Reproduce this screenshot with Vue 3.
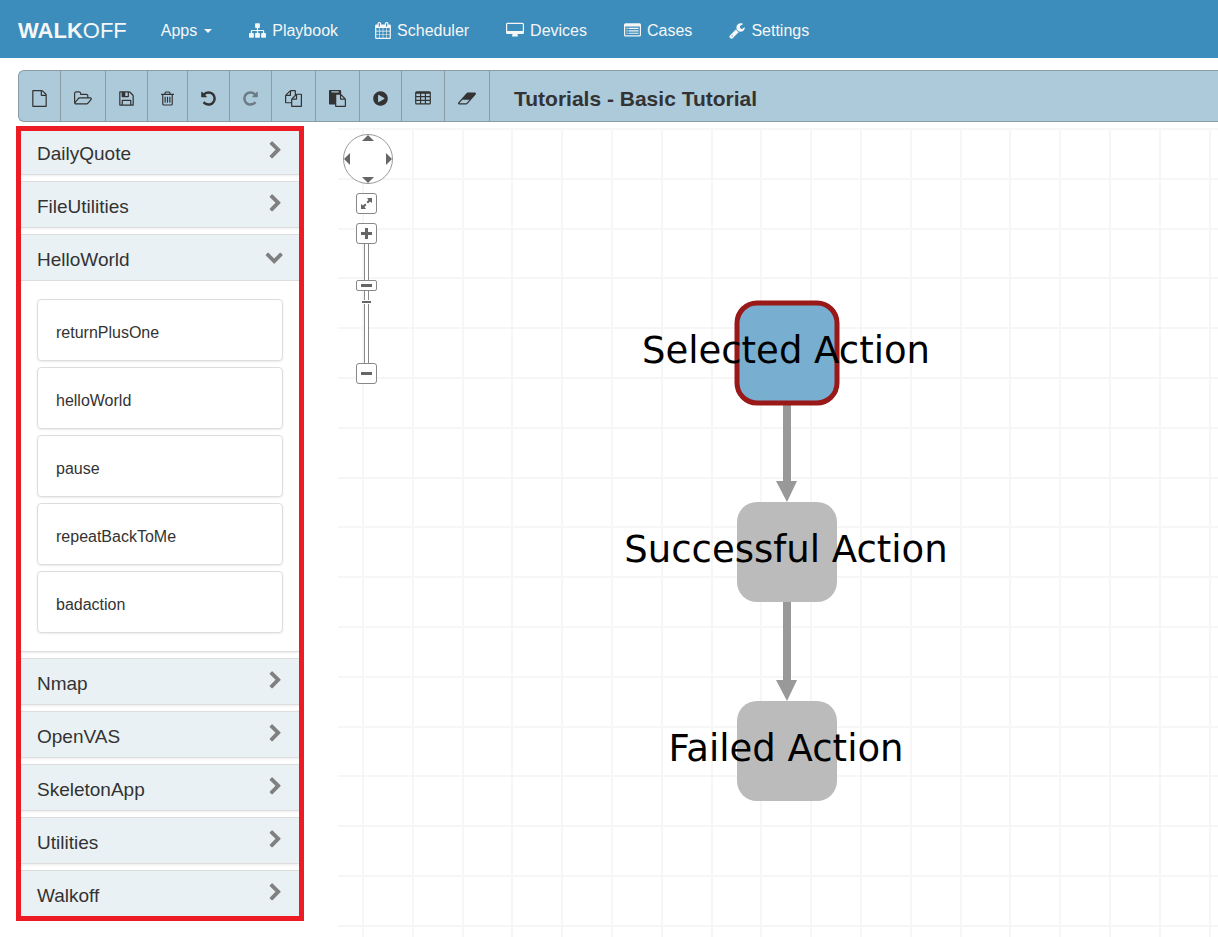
<script setup>
import { ref } from 'vue'

const navItems = [
  { label: 'Playbook', width: 17, box: '0 0 1792 1792', path: 'M1792 1248v320q0 40-28 68t-68 28h-320q-40 0-68-28t-28-68v-320q0-40 28-68t68-28h96v-192h-512v192h96q40 0 68 28t28 68v320q0 40-28 68t-68 28h-320q-40 0-68-28t-28-68v-320q0-40 28-68t68-28h96v-192h-512v192h96q40 0 68 28t28 68v320q0 40-28 68t-68 28h-320q-40 0-68-28t-28-68v-320q0-40 28-68t68-28h96v-192q0-52 38-90t90-38h512v-192h-96q-40 0-68-28t-28-68v-320q0-40 28-68t68-28h320q40 0 68 28t28 68v320q0 40-28 68t-68 28h-96v192h512q52 0 90 38t38 90v192h96q40 0 68 28t28 68z' },
  { label: 'Scheduler', width: 16, box: '64 0 1664 1792', path: 'M192 1664h288v-288h-288v288zm352 0h320v-288h-320v288zm-352-352h288v-320h-288v320zm352 0h320v-320h-320v320zm-352-384h288v-288h-288v288zm736 736h320v-288h-320v288zm-384-736h320v-288h-320v288zm768 736h288v-288h-288v288zm-384-352h320v-320h-320v320zm-352-864v-288q0-13-9.5-22.5t-22.5-9.5h-64q-13 0-22.5 9.5t-9.5 22.5v288q0 13 9.5 22.5t22.5 9.5h64q13 0 22.5-9.5t9.5-22.5zm736 864h288v-320h-288v320zm-384-384h320v-288h-320v288zm384 0h288v-288h-288v288zm32-480v-288q0-13-9.5-22.5t-22.5-9.5h-64q-13 0-22.5 9.5t-9.5 22.5v288q0 13 9.5 22.5t22.5 9.5h64q13 0 22.5-9.5t9.5-22.5zm384-64v1280q0 52-38 90t-90 38h-1408q-52 0-90-38t-38-90v-1280q0-52 38-90t90-38h128v-96q0-66 47-113t113-47h64q66 0 113 47t47 113v96h384v-96q0-66 47-113t113-47h64q66 0 113 47t47 113v96h128q52 0 90 38t38 90z' },
  { label: 'Devices', width: 18, box: '64 0 1920 1792', path: 'M224 64h1600q66 0 113 47t47 113v896q0 66-47 113t-113 47h-544q0 37 16 77.5t32 71 16 43.5q0 26-19 45t-45 19h-512q-26 0-45-19t-19-45q0-14 16-44t32-70 16-78h-544q-66 0-113-47t-47-113v-896q0-66 47-113t113-47zM224 192q-32 0-32 32v704q0 32 32 32h1600q32 0 32-32v-704q0-32-32-32z' },
  { label: 'Cases', width: 17, box: '0 0 1792 1792', path: 'M160 128h1472q66 0 113 47t47 113v1088q0 66-47 113t-113 47h-1472q-66 0-113-47t-47-113v-1088q0-66 47-113t113-47zM160 480q-32 0-32 32v864q0 32 32 32h1472q32 0 32-32v-864q0-32-32-32zM256 608h128v128h-128zM256 864h128v128h-128zM256 1120h128v128h-128zM480 608h1056v128h-1056zM480 864h1056v128h-1056zM480 1120h1056v128h-1056z' },
  { label: 'Settings', width: 16, box: '64 0 1664 1792', path: 'M448 1472q0-26-19-45t-45-19-45 19-19 45 19 45 45 19 45-19 19-45zm644-420l-682 682q-37 37-90 37-52 0-91-37l-106-108q-38-36-38-90 0-53 38-91l681-681q39 98 114.5 173.5t173.5 114.5zm634-435q0 39-23 106-47 134-164.5 217.5t-258.5 83.5q-185 0-316.5-131.5t-131.5-316.5 131.5-316.5 316.5-131.5q58 0 121.5 16.5t107.5 46.5q16 11 16 28t-16 28l-293 169v224l193 107q5-3 79-48.5t135.5-81 70.5-35.5q15 0 23.5 10t8.5 25z' }
]

const arrowPath = 'M1664 896q0 156-61 298t-164 245-245 164-298 61q-172 0-327-72.5t-264-204.5q-7-10-6.5-22.5t8.5-20.5l137-138q10-9 25-9 16 2 23 12 73 95 179 147t225 52q104 0 198.5-40.5t163.5-109.5 109.5-163.5 40.5-198.5-40.5-198.5-109.5-163.5-163.5-109.5-198.5-40.5q-98 0-188 35.5t-160 101.5l137 138q31 30 14 69-17 40-59 40h-448q-26 0-45-19t-19-45v-448q0-42 40-59 39-17 69 14l130 129q107-101 244.5-156.5t284.5-55.5q156 0 298 61t245 164 164 245 61 298z'

const tools = [
  { label: 'New', width: 15, box: '128 0 1536 1792', path: 'M1596 380q28 28 48 76t20 88v1152q0 40-28 68t-68 28h-1344q-40 0-68-28t-28-68v-1600q0-40 28-68t68-28h896q40 0 88 20t76 48zm-444-244v376h376q-10-29-22-41l-313-313q-12-12-41-22zm384 1528v-1024h-416q-40 0-68-28t-28-68v-416h-768v1536h1280z' },
  { label: 'Open', width: 18, box: '64 0 1920 1792', path: 'M1845 931q0-35-53-35h-1088q-40 0-85.5 21.5t-71.5 52.5l-294 363q-18 24-18 40 0 35 53 35h1088q40 0 86-22t71-53l294-363q18-22 18-39zm-1141-163h768v-160q0-40-28-68t-68-28h-576q-40 0-68-28t-28-68v-64q0-40-28-68t-68-28h-320q-40 0-68 28t-28 68v853l256-315q44-53 116-87.5t140-34.5zm1269 163q0 62-46 120l-295 363q-43 53-116 87.5t-140 34.5h-1088q-92 0-158-66t-66-158v-960q0-92 66-158t158-66h320q92 0 158 66t66 158v32h544q92 0 158 66t66 158v160h192q54 0 99 24.5t67 70.5q15 32 15 68z' },
  { label: 'Save', width: 15, box: '128 0 1536 1792', path: 'M512 1536h768v-384h-768v384zm896 0h128v-896q0-14-10-38.5t-20-34.5l-281-281q-10-10-34-20t-39-10v416q0 40-28 68t-68 28h-576q-40 0-68-28t-28-68v-416h-128v1280h128v-416q0-40 28-68t68-28h832q40 0 68 28t28 68v416zm-384-928v-320q0-13-9.5-22.5t-22.5-9.5h-192q-13 0-22.5 9.5t-9.5 22.5v320q0 13 9.5 22.5t22.5 9.5h192q13 0 22.5-9.5t9.5-22.5zm640 32v928q0 40-28 68t-68 28h-1344q-40 0-68-28t-28-68v-1344q0-40 28-68t68-28h928q40 0 88 20t76 48l280 280q28 28 48 76t20 88z' },
  { label: 'Delete', width: 13, box: '192 0 1408 1792', path: 'M704 736v576q0 14-9 23t-23 9h-64q-14 0-23-9t-9-23v-576q0-14 9-23t23-9h64q14 0 23 9t9 23zm256 0v576q0 14-9 23t-23 9h-64q-14 0-23-9t-9-23v-576q0-14 9-23t23-9h64q14 0 23 9t9 23zm256 0v576q0 14-9 23t-23 9h-64q-14 0-23-9t-9-23v-576q0-14 9-23t23-9h64q14 0 23 9t9 23zm128 724v-948h-896v948q0 22 7 40.5t14.5 27 10.5 8.5h832q3 0 10.5-8.5t14.5-27 7-40.5zm-672-1076h448l-48-117q-7-9-17-11h-317q-10 2-17 11zm928 32v64q0 14-9 23t-23 9h-96v948q0 83-47 143.5t-113 60.5h-832q-66 0-113-58.5t-47-141.5v-952h-96q-14 0-23-9t-9-23v-64q0-14 9-23t23-9h309l70-167q15-37 54-63t79-26h320q40 0 79 26t54 63l70 167h309q14 0 23 9t9 23z' },
  { label: 'Undo', width: 15, box: '128 0 1536 1792', path: arrowPath },
  { label: 'Redo', width: 15, box: '128 0 1536 1792', path: arrowPath, flip: true, disabled: true },
  { label: 'Copy', width: 17, box: '0 0 1792 1792', path: 'M1696 384q40 0 68 28t28 68v1216q0 40-28 68t-68 28h-960q-40 0-68-28t-28-68v-288h-544q-40 0-68-28t-28-68v-672q0-40 20-88t48-76l408-408q28-28 76-48t88-20h416q40 0 68 28t28 68v328q68-40 128-40h416zm-544 213l-299 299h299v-299zm-640-384l-299 299h299v-299zm196 647l316-316v-416h-384v416q0 40-28 68t-68 28h-416v640h512v-256q0-40 20-88t48-76zm956 804v-1152h-384v416q0 40-28 68t-68 28h-416v640h896z' },
  { label: 'Paste', width: 17, box: '0 0 1792 1792', path: 'M768 1664h896v-640h-416q-40 0-68-28t-28-68v-416h-384v1152zm256-1440v-64q0-13-9.5-22.5t-22.5-9.5h-704q-13 0-22.5 9.5t-9.5 22.5v64q0 13 9.5 22.5t22.5 9.5h704q13 0 22.5-9.5t9.5-22.5zm256 672h299l-299-299v299zm512 128v672q0 40-28 68t-68 28h-960q-40 0-68-28t-28-68v-160h-544q-40 0-68-28t-28-68v-1344q0-40 28-68t68-28h1088q40 0 68 28t28 68v328q21 13 36 28l408 408q28 28 48 76t20 88z' },
  { label: 'Execute', width: 15, box: '128 0 1536 1792', path: 'M896 128q209 0 385.5 103t279.5 279.5 103 385.5-103 385.5-279.5 279.5-385.5 103-385.5-103-279.5-279.5-103-385.5 103-385.5 279.5-279.5 385.5-103zm384 823q32-18 32-55t-32-55l-544-320q-31-19-64-1-32 19-32 56v640q0 37 32 56 16 8 32 8 17 0 32-9z' },
  { label: 'Results', width: 16, box: '64 0 1664 1792', path: 'M1728 288v1088q0 66-47 113t-113 47h-1344q-66 0-113-47t-47-113v-1088q0-66 47-113t113-47h1344q66 0 113 47t47 113zM192 384h384v256h-384zM704 384h384v256h-384zM1216 384h384v256h-384zM192 768h384v256h-384zM704 768h384v256h-384zM1216 768h384v256h-384zM192 1152h384v256h-384zM704 1152h384v256h-384zM1216 1152h384v256h-384z' },
  { label: 'Clear', width: 18, box: '64 0 1920 1792', path: 'M960 1408l336-384h-768l-336 384h768zm1013-1077q15 34 9.5 71.5t-30.5 65.5l-896 1024q-38 44-96 44h-768q-38 0-69.5-20.5t-47.5-54.5q-15-34-9.5-71.5t30.5-65.5l896-1024q38-44 96-44h768q38 0 69.5 20.5t47.5 54.5z' }
]

const apps = [
  { name: 'DailyQuote', actions: [] },
  { name: 'FileUtilities', actions: [] },
  { name: 'HelloWorld', actions: ['returnPlusOne', 'helloWorld', 'pause', 'repeatBackToMe', 'badaction'] },
  { name: 'Nmap', actions: [] },
  { name: 'OpenVAS', actions: [] },
  { name: 'SkeletonApp', actions: [] },
  { name: 'Utilities', actions: [] },
  { name: 'Walkoff', actions: [] }
]
const openApp = ref('HelloWorld')
const toggle = (name) => { openApp.value = openApp.value === name ? '' : name }

const zoom = ref(67)
const gridSteps = [1, 51, 101, 150, 200]

const nodes = [
  { label: 'Selected Action', y: 175, selected: true },
  { label: 'Successful Action', y: 374 },
  { label: 'Failed Action', y: 573 }
]
</script>

<template>
  <div class="page">
    <header class="navbar">
      <a class="brand" href="#"><b>WALK</b>OFF</a>
      <nav class="nav">
        <a href="#" class="nav-link">Apps <span class="caret"></span></a>
        <a v-for="n in navItems" :key="n.label" href="#" class="nav-link">
          <svg :width="n.width" height="17" :viewBox="n.box" aria-hidden="true"><path :d="n.path" fill-rule="evenodd" /></svg>{{ n.label }}
        </a>
      </nav>
    </header>

    <div class="toolbar">
      <button v-for="t in tools" :key="t.label" type="button" class="tool" :aria-label="t.label" :disabled="t.disabled">
        <svg :width="t.width" height="17" :viewBox="t.box" :class="{ flip: t.flip }" aria-hidden="true"><path :d="t.path" fill-rule="evenodd" /></svg>
      </button>
      <h1 class="title">Tutorials - Basic Tutorial</h1>
    </div>

    <main class="workspace">
      <aside class="sidebar">
        <section v-for="app in apps" :key="app.name" class="panel">
          <button type="button" class="panel-head" :class="{ open: openApp === app.name }" :aria-expanded="openApp === app.name" @click="toggle(app.name)">
            <span>{{ app.name }}</span>
            <svg class="chevron" width="19" height="19" viewBox="0 0 1792 1792" aria-hidden="true"><path d="M1363 877l-742 742q-19 19-45 19t-45-19l-166-166q-19-19-19-45t19-45l531-531-531-531q-19-19-19-45t19-45l166-166q19-19 45-19t45 19l742 742q19 19 19 45t-19 45z" /></svg>
          </button>
          <ul v-if="openApp === app.name && app.actions.length" class="actions">
            <li v-for="a in app.actions" :key="a" class="action" draggable="true">{{ a }}</li>
          </ul>
        </section>
      </aside>

      <div class="canvas">
        <svg class="graph" width="100%" height="100%">
          <defs>
            <pattern id="grid" x="24" y="0" width="249" height="249" patternUnits="userSpaceOnUse">
              <path v-for="s in gridSteps" :key="s" :d="`M${s} 0V249M0 ${s}H249`" stroke="#f6f6f6" stroke-width="2" />
            </pattern>
          </defs>
          <rect width="100%" height="100%" fill="url(#grid)" />
          <g fill="#999">
            <path d="M445 276h8v77h6l-10 21-11-21h7z" />
            <path d="M445 474h8v78h6l-10 21-11-21h7z" />
          </g>
          <g v-for="n in nodes" :key="n.label">
            <rect x="399" :y="n.y" width="100" height="100" rx="20" :class="n.selected ? 'node selected' : 'node'" />
            <text x="448" :y="n.y + 60" class="node-label">{{ n.label }}</text>
          </g>
        </svg>

        <div class="controls">
          <div class="pan">
            <button type="button" class="up" aria-label="Pan up"><svg width="12" height="6" viewBox="0 0 12 6"><path d="M0 6l6-6 6 6z" /></svg></button>
            <button type="button" class="left" aria-label="Pan left"><svg width="6" height="12" viewBox="0 0 6 12"><path d="M6 0v12l-6-6z" /></svg></button>
            <button type="button" class="right" aria-label="Pan right"><svg width="6" height="12" viewBox="0 0 6 12"><path d="M0 0v12l6-6z" /></svg></button>
            <button type="button" class="down" aria-label="Pan down"><svg width="12" height="6" viewBox="0 0 12 6"><path d="M0 0l6 6 6-6z" /></svg></button>
          </div>
          <button type="button" class="square fit" aria-label="Fit to view">
            <svg width="13" height="13" viewBox="0 0 13 13"><path d="M7 1h5v5L10 4.500 8 6.500 6.500 5l2-2zM6 12H1V7l2 1.500 2-2L6.500 8l-2 2z" /></svg>
          </button>
          <button type="button" class="square" aria-label="Zoom in">
            <svg width="11" height="11" viewBox="0 0 11 11"><path d="M4 0h3v4h4v3H7v4H4V7H0V4h4z" /></svg>
          </button>
          <div class="zoom">
            <input v-model="zoom" type="range" min="0" max="100" aria-label="Zoom level">
            <span class="tick"></span>
          </div>
          <button type="button" class="square" aria-label="Zoom out">
            <svg width="11" height="11" viewBox="0 0 11 11"><path d="M0 4h11v3H0z" /></svg>
          </button>
        </div>
      </div>
    </main>
  </div>
</template>

<style>
body {
  margin: 0;
  background: #fff;
}
</style>

<style scoped>
* {
  box-sizing: border-box;
}
.page {
  display: flex;
  flex-direction: column;
  min-height: 100vh;
  overflow: hidden;
  font-family: "Liberation Sans", Arial, sans-serif;
  font-size: 16px;
  color: #333;
}
button {
  margin: 0;
  padding: 0;
  border: 0;
  background: none;
  font: inherit;
  color: inherit;
  cursor: pointer;
}
svg {
  display: block;
  flex: none;
  fill: currentColor;
}
.navbar {
  display: flex;
  align-items: center;
  gap: 34px;
  height: 58px;
  padding: 3px 18px 0;
  background: #3c8dbc;
}
.brand {
  font-size: 22px;
  line-height: 24px;
  color: #f6f6f6;
  text-decoration: none;
}
.nav {
  display: flex;
  gap: 37px;
}
.nav-link {
  display: flex;
  align-items: center;
  gap: 6px;
  line-height: 24px;
  color: #f6f6f6;
  text-decoration: none;
  white-space: nowrap;
}
.caret {
  margin-left: 1px;
  border: 4px solid transparent;
  border-top-color: currentColor;
  border-bottom: 0;
}
.toolbar {
  display: flex;
  margin: 12px 0 4px 18px;
  height: 52px;
  border: 1px solid #8b9ba5;
  border-right: 0;
  border-radius: 6px 0 0 6px;
  background: #adcadb;
}
.tool {
  display: flex;
  align-items: center;
  padding: 4px 13px 0;
  border-right: 1px solid #8b9ba5;
}
.tool:disabled {
  color: #6c7a84;
  cursor: default;
}
.flip {
  transform: scaleX(-1);
}
.title {
  margin: 0;
  padding: 6px 24px 0;
  align-self: center;
  font-size: 21px;
  line-height: 24px;
}
.workspace {
  display: flex;
  flex: 1;
  align-items: flex-start;
  gap: 34px;
  padding-left: 16px;
}
.sidebar {
  display: flex;
  flex: none;
  flex-direction: column;
  gap: 6px;
  width: 288px;
  border: 5px solid #ed1c24;
  background: #fff;
}
.panel {
  border-top: 1px solid #ddd;
  border-bottom: 1px solid #ddd;
  box-shadow: 0 1px 2px rgba(0, 0, 0, 0.08);
}
.panel:first-child {
  border-top: 0;
}
.panel:last-child {
  border-bottom: 0;
  box-shadow: none;
}
.panel-head {
  display: flex;
  align-items: center;
  justify-content: space-between;
  width: 100%;
  padding: 13px 14px 8px 16px;
  background: #e9f1f5;
  font-size: 19px;
  line-height: 24px;
}
.panel:first-child .panel-head {
  padding-top: 11px;
}
.panel-head.open {
  border-bottom: 1px solid #ddd;
}
.chevron {
  margin: -2px 0 5px;
  color: #808080;
}
.open .chevron {
  margin: 0 2px 3px 0;
  transform: rotate(90deg);
}
.actions {
  display: flex;
  flex-direction: column;
  gap: 6px;
  margin: 0;
  padding: 18px 16px;
  list-style: none;
}
.action {
  padding: 22px 18px 16px;
  border: 1px solid #ddd;
  border-radius: 4px;
  box-shadow: 0 1px 2px rgba(0, 0, 0, 0.08);
  line-height: 22px;
  cursor: move;
}
.canvas {
  position: relative;
  flex: 1;
  align-self: stretch;
  margin-top: 2px;
  min-height: 700px;
}
.graph {
  position: absolute;
  inset: 0;
}
.node {
  fill: #bbb;
}
.node.selected {
  fill: #78aed0;
  stroke: #991818;
  stroke-width: 5px;
}
.node-label {
  fill: #000;
  font-family: "DejaVu Sans", sans-serif;
  font-size: 37px;
  text-anchor: middle;
}
.controls {
  position: absolute;
  top: 6px;
  left: 5px;
  display: flex;
  flex-direction: column;
  width: 50px;
  color: #666;
}
.pan {
  display: grid;
  grid-template: 6px 1fr 6px / 6px 1fr 6px;
  place-items: center;
  height: 50px;
  border: 1px solid #999;
  border-radius: 50%;
  background: #fff;
}
.up {
  grid-area: 1 / 2;
}
.left {
  grid-area: 2 / 1;
}
.right {
  grid-area: 2 / 3;
}
.down {
  grid-area: 3 / 2;
}
.square {
  display: flex;
  align-items: center;
  justify-content: center;
  width: 21px;
  height: 21px;
  margin-left: 13px;
  border: 1px solid #888;
  border-radius: 3px;
  background: #fff;
}
.fit {
  margin-top: 9px;
  margin-bottom: 9px;
}
.zoom {
  position: relative;
  width: 21px;
  height: 119px;
  margin-left: 13px;
}
.zoom input {
  display: block;
  appearance: none;
  writing-mode: vertical-lr;
  direction: rtl;
  width: 21px;
  height: 119px;
  margin: 0;
  background: none;
}
.zoom input::-webkit-slider-runnable-track {
  width: 21px;
  height: 119px;
  background: linear-gradient(90deg, transparent 8px, #888 8px 9px, #fff 9px 12px, #888 12px 13px, transparent 13px);
}
.zoom input::-webkit-slider-thumb {
  appearance: none;
  box-sizing: border-box;
  width: 21px;
  height: 11px;
  border: 1px solid #888;
  border-radius: 2px;
  background: linear-gradient(#666, #666) center / 11px 3px no-repeat #fff;
}
.tick {
  position: absolute;
  top: 56px;
  left: 6px;
  width: 9px;
  height: 4px;
  border: solid #fff;
  border-width: 1px 0;
  background: #666;
}
</style>
